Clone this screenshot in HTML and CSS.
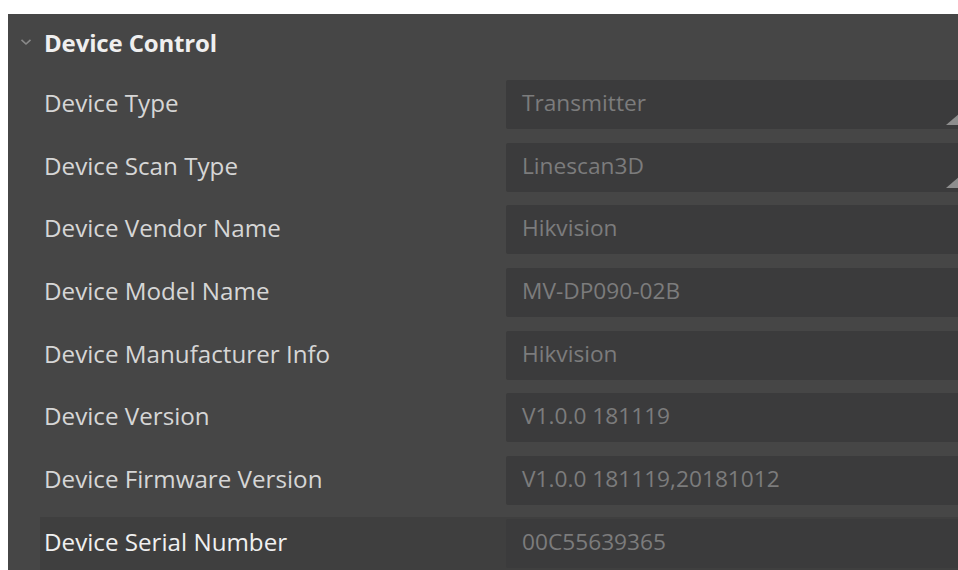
FILE: index.html
```html
<!DOCTYPE html>
<html lang="en">
<head>
<meta charset="utf-8">
<title>Device Control</title>
<link rel="stylesheet" href="styles.css">
</head>
<body>
<div class="panel">
  <div class="group-head">
    <svg class="chevron" width="12" height="8" viewBox="0 0 12 8"><path d="M1.5 1.8 L6 6 L10.5 1.8" fill="none" stroke="#8a8a8a" stroke-width="1.6"/></svg>
    <span class="group-title">Device Control</span>
  </div>
  <div class="props">
    <div class="prop"><span class="prop-name">Device Type</span><div class="prop-value combo">Transmitter</div></div>
    <div class="prop"><span class="prop-name">Device Scan Type</span><div class="prop-value combo">Linescan3D</div></div>
    <div class="prop"><span class="prop-name">Device Vendor Name</span><div class="prop-value">Hikvision</div></div>
    <div class="prop"><span class="prop-name">Device Model Name</span><div class="prop-value">MV-DP090-02B</div></div>
    <div class="prop"><span class="prop-name">Device Manufacturer Info</span><div class="prop-value">Hikvision</div></div>
    <div class="prop"><span class="prop-name">Device Version</span><div class="prop-value">V1.0.0 181119</div></div>
    <div class="prop"><span class="prop-name">Device Firmware Version</span><div class="prop-value">V1.0.0 181119,20181012</div></div>
    <div class="prop selected"><span class="prop-name">Device Serial Number</span><div class="prop-value">00C55639365</div></div>
  </div>
</div>
</body>
</html>
```

FILE: styles.css
```css
html, body {
  margin: 0;
  background: #ffffff;
  overflow: hidden;
}

body {
  padding: 14px 0 0 8px;
  font-family: "Open Sans", "Noto Sans", sans-serif;
}

.panel {
  background: #464646;
  width: calc(100vw - 8px);
  height: calc(100vh - 14px);
  overflow: hidden;
}

.group-head {
  height: 56px;
  display: flex;
  align-items: center;
}

.chevron {
  margin-left: 12px;
  margin-right: 12px;
  flex: none;
}

.group-title {
  color: #efefef;
  font-weight: 700;
  font-size: 24px;
  letter-spacing: -0.15px;
}

.props {
  padding-top: 8px;
  margin-left: 32px;
}

.prop {
  display: flex;
  height: 62.7px;
  box-sizing: border-box;
  padding-top: 2px;
}

.prop.selected {
  background: #3f3f3f;
}

.prop-name {
  flex: none;
  width: 462px;
  padding-left: 4px;
  height: 49px;
  line-height: 46px;
  color: #d6d6d6;
  font-size: 24.2px;
  white-space: nowrap;
}

.prop.selected .prop-name {
  color: #f0f0f0;
}

.prop-value {
  flex: none;
  position: relative;
  width: 444px;
  height: 49px;
  line-height: 46px;
  padding-left: 16px;
  background: #3b3b3c;
  border-radius: 2px;
  color: #7c7c7c;
  font-size: 22.7px;
  white-space: nowrap;
}

/* resize grip drawn in the lower-right corner of combo boxes */
.combo::after {
  content: "";
  position: absolute;
  right: 6px;
  bottom: 4px;
  width: 0;
  height: 0;
  border-left: 14px solid transparent;
  border-bottom: 12px solid #8e8e8e;
}
```
